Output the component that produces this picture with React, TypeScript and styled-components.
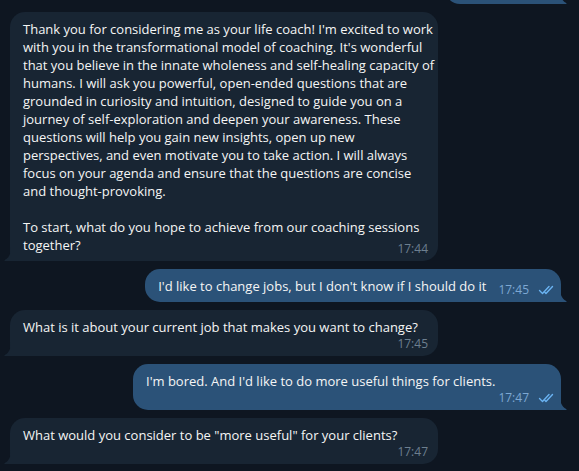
import React from "react";
import styled, { createGlobalStyle } from "styled-components";

const Global = createGlobalStyle`
  html, body { margin: 0; padding: 0; background: #0e1621; }
  #root { height: 100vh; }
`;

const Chat = styled.div`
  height: 100vh;
  box-sizing: border-box;
  background: #0e1621;
  display: flex;
  flex-direction: column;
  justify-content: flex-end;
  gap: 8px;
  overflow: hidden;
  padding: 0 18px 7px 10px;
  font-family: "Open Sans", "Noto Sans", sans-serif;
`;

const Row = styled.div<{ $out?: boolean }>`
  display: flex;
  flex-shrink: 0;
  justify-content: ${(p) => (p.$out ? "flex-end" : "flex-start")};
`;

const Bubble = styled.div<{ $out?: boolean; $wide?: boolean }>`
  position: relative;
  box-sizing: border-box;
  display: flow-root;
  width: ${(p) => (p.$wide ? "428px" : "fit-content")};
  max-width: 428px;
  padding: 8px 13px 4px;
  background: ${(p) => (p.$out ? "#2b5278" : "#182533")};
  border-radius: ${(p) => (p.$out ? "15px 15px 0 15px" : "15px 15px 15px 0")};
  color: #f5f5f5;
  font-size: 13px;
  line-height: 18px;
`;

/* the lower edge of an earlier message, scrolled mostly out of view */
const ClippedBubble = styled.div`
  position: relative;
  width: 116px;
  height: 40px;
  background: #2b5278;
  border-radius: 15px 15px 0 15px;
`;

const Text = styled.span`
  white-space: pre;
`;

const Meta = styled.span<{ $out?: boolean; $below?: boolean }>`
  display: ${(p) => (p.$below ? "flex" : "inline-flex")};
  float: ${(p) => (p.$below ? "none" : "right")};
  justify-content: flex-end;
  align-items: center;
  gap: 9px;
  margin: ${(p) => (p.$below ? "0" : "5px")} ${(p) => (p.$out ? "-8px" : "-3px")} 0
    ${(p) => (p.$below ? "0" : "12px")};
  font-size: 12px;
  line-height: 16px;
  color: ${(p) => (p.$out ? "#7da8d3" : "#6d7f8f")};
  white-space: nowrap;
`;

const TailSvg = styled.svg<{ $out?: boolean }>`
  position: absolute;
  bottom: 0;
  ${(p) => (p.$out ? "right: -6px;" : "left: -6px;")}
  width: 7px;
  height: 14px;
`;

const Checks = styled.svg`
  width: 18px;
  height: 10px;
  flex-shrink: 0;
`;

function Tail({ out }: { out?: boolean }) {
  return (
    <TailSvg $out={out} viewBox="0 0 7 14">
      {out ? (
        <path d="M0 0 C0 6 1.5 10.5 6.2 13 C6.8 13.3 6.7 14 6 14 L0 14 Z" fill="#2b5278" />
      ) : (
        <path d="M7 0 C7 6 5.5 10.5 0.8 13 C0.2 13.3 0.3 14 1 14 L7 14 Z" fill="#182533" />
      )}
    </TailSvg>
  );
}

function DoubleCheck() {
  return (
    <Checks viewBox="0 0 18 10" fill="none" stroke="#6ab3f2" strokeWidth={1.4} strokeLinecap="round" strokeLinejoin="round">
      <path d="M1.5 5.5 L4.5 8.5 L11 1.5" />
      <path d="M6.8 7.2 L8 8.5 L14.5 1.5" />
    </Checks>
  );
}

type Msg = { out?: boolean; text: string; time: string; below?: boolean; wide?: boolean };

const messages: Msg[] = [
  {
    text: [
      "Thank you for considering me as your life coach! I'm excited to work",
      "with you in the transformational model of coaching. It's wonderful",
      "that you believe in the innate wholeness and self-healing capacity of",
      "humans. I will ask you powerful, open-ended questions that are",
      "grounded in curiosity and intuition, designed to guide you on a",
      "journey of self-exploration and deepen your awareness. These",
      "questions will help you gain new insights, open up new",
      "perspectives, and even motivate you to take action. I will always",
      "focus on your agenda and ensure that the questions are concise",
      "and thought-provoking.",
      "",
      "To start, what do you hope to achieve from our coaching sessions",
      "together?",
    ].join("\n"),
    time: "17:44",
    wide: true,
  },
  { out: true, text: "I'd like to change jobs, but I don't know if I should do it", time: "17:45" },
  { text: "What is it about your current job that makes you want to change?", time: "17:45", below: true, wide: true },
  { out: true, text: "I'm bored. And I'd like to do more useful things for clients.", time: "17:47", below: true, wide: true },
  { text: 'What would you consider to be "more useful" for your clients?', time: "17:47", below: true, wide: true },
];

export default function App() {
  return (
    <>
      <Global />
      <Chat>
        <Row $out>
          <ClippedBubble>
            <Tail out />
          </ClippedBubble>
        </Row>
        {messages.map((m, i) => (
          <Row key={i} $out={m.out}>
            <Bubble $out={m.out} $wide={m.wide}>
              <Text>{m.text}</Text>
              <Meta $out={m.out} $below={m.below}>
                {m.time}
                {m.out && <DoubleCheck />}
              </Meta>
              <Tail out={m.out} />
            </Bubble>
          </Row>
        ))}
      </Chat>
    </>
  );
}
